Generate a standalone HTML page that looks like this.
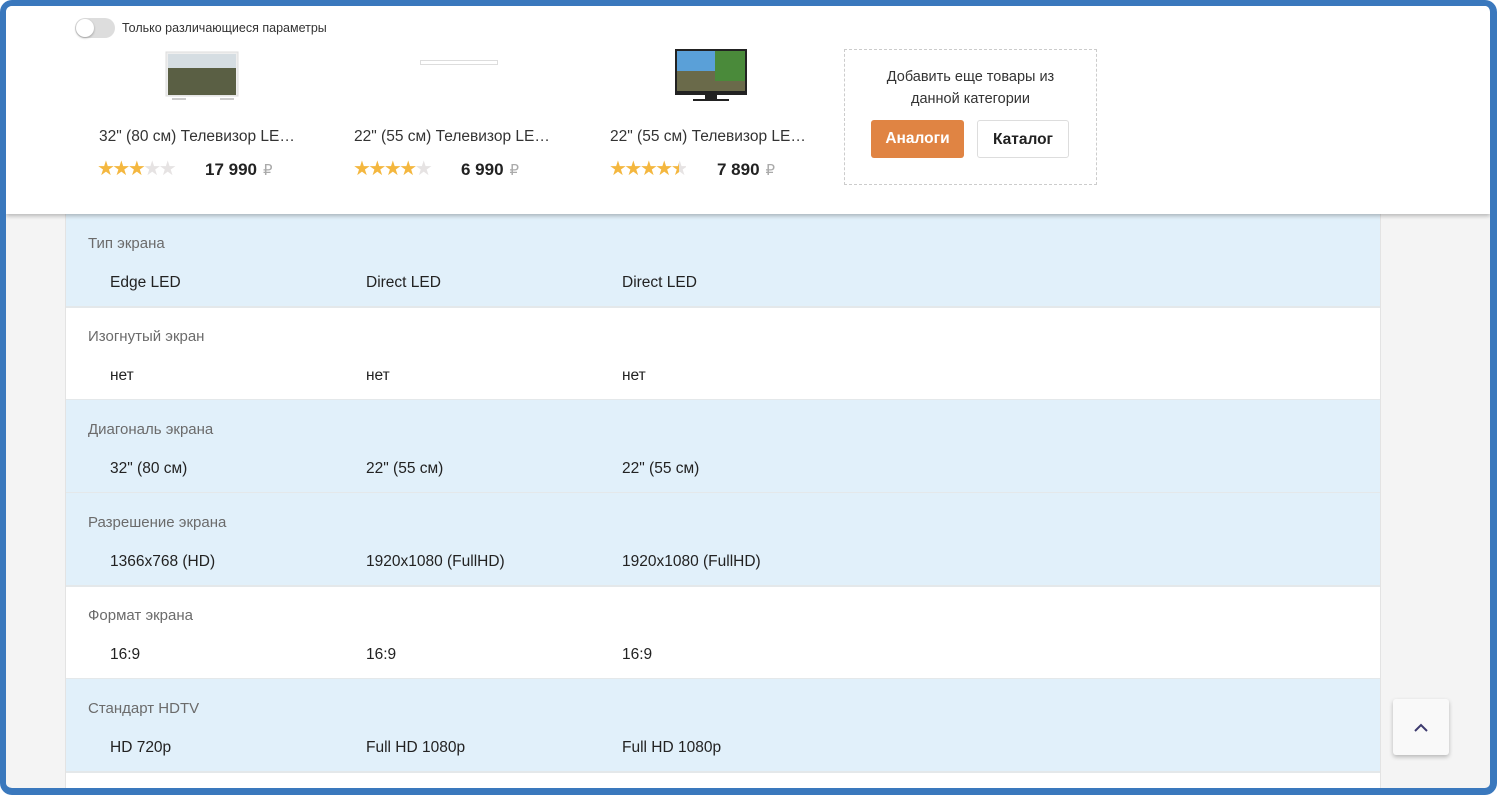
<!DOCTYPE html>
<html><head><meta charset="utf-8"><style>
*{box-sizing:border-box;margin:0;padding:0}
html,body{width:1497px;height:796px;overflow:hidden;background:#fff;font-family:"Liberation Sans","DejaVu Sans",sans-serif}
.frame{position:absolute;left:0;top:0;width:1497px;height:795px;border:6px solid #3a78bd;border-right-width:7px;border-bottom-width:7px;border-radius:12px;overflow:hidden;background:#f4f4f4}
.col{position:absolute;left:59px;top:0;width:1316px;height:800px;background:#fff;border-left:1px solid #e3e3e3;border-right:1px solid #e3e3e3}
.row{position:absolute;left:0;width:1314px;height:94px;border-bottom:2px solid #e4e8ea}
.row.b{background:#e1f0fa}
.lab{position:absolute;left:22px;top:21px;font-size:15px;color:#6b6b6b}
.v{position:absolute;top:60px;font-size:15.5px;color:#222}
.head{position:absolute;left:0;top:0;width:1484px;height:208px;background:#fff;box-shadow:0 2px 4px rgba(0,0,0,.25);z-index:2}
.tog{position:absolute;left:69px;top:12px;width:40px;height:20px;border-radius:10px;background:#ddd}
.tog:after{content:"";position:absolute;left:1px;top:1px;width:18px;height:18px;border-radius:50%;background:#fff;box-shadow:0 1px 2px rgba(0,0,0,.3)}
.togl{position:absolute;left:116px;top:15px;font-size:12.5px;color:#333}
.name{position:absolute;top:122px;font-size:15.5px;color:#333}
.stars{position:absolute;top:150px;font-size:20px;letter-spacing:-2.5px;color:#f4b73f}
.stars i{font-style:normal;color:#e6e3e3}
.price{position:absolute;top:154px;font-size:17px;font-weight:bold;color:#222}
.price span{font-weight:normal;color:#aaa;font-size:15px;margin-left:6px}
.add{position:absolute;left:838px;top:43px;width:253px;height:136px;border:1px dashed #ccc;text-align:center}
.add p{font-size:14.5px;color:#333;line-height:22px;margin-top:16px}
.btn{position:absolute;top:70px;height:38px;border-radius:3px;font-size:15.5px;font-weight:bold;line-height:37px;text-align:center}
.up{position:absolute;left:1387px;top:693px;width:56px;height:56px;background:#f9f9f9;border-radius:3px;box-shadow:0 2px 4px rgba(0,0,0,.25)}
</style></head><body>
<div class="frame">
 <div class="col">
  <div class="row b" style="top:208px"><div class="lab">Тип экрана</div><div class="v" style="left:44px">Edge LED</div><div class="v" style="left:300px">Direct LED</div><div class="v" style="left:556px">Direct LED</div></div>
  <div class="row" style="top:301px"><div class="lab">Изогнутый экран</div><div class="v" style="left:44px">нет</div><div class="v" style="left:300px">нет</div><div class="v" style="left:556px">нет</div></div>
  <div class="row b" style="top:394px"><div class="lab">Диагональ экрана</div><div class="v" style="left:44px">32" (80 см)</div><div class="v" style="left:300px">22" (55 см)</div><div class="v" style="left:556px">22" (55 см)</div></div>
  <div class="row b" style="top:487px"><div class="lab">Разрешение экрана</div><div class="v" style="left:44px">1366x768 (HD)</div><div class="v" style="left:300px">1920x1080 (FullHD)</div><div class="v" style="left:556px">1920x1080 (FullHD)</div></div>
  <div class="row" style="top:580px"><div class="lab">Формат экрана</div><div class="v" style="left:44px">16:9</div><div class="v" style="left:300px">16:9</div><div class="v" style="left:556px">16:9</div></div>
  <div class="row b" style="top:673px"><div class="lab">Стандарт HDTV</div><div class="v" style="left:44px">HD 720p</div><div class="v" style="left:300px">Full HD 1080p</div><div class="v" style="left:556px">Full HD 1080p</div></div>
 </div>
 <div class="head">
  <div class="tog"></div><div class="togl">Только различающиеся параметры</div>
  <svg style="position:absolute;left:158px;top:44px" width="78" height="56"><rect x="2" y="2" width="72" height="44" fill="#eee" stroke="#ddd"/><rect x="4" y="4" width="68" height="14" fill="#d5dde2"/><rect x="4" y="18" width="68" height="27" fill="#5a5f44"/><rect x="8" y="48" width="14" height="2" fill="#ccc"/><rect x="56" y="48" width="14" height="2" fill="#ccc"/></svg>
  <div style="position:absolute;left:414px;top:54px;width:78px;height:5px;border:1px solid #ddd"></div>
  <svg style="position:absolute;left:669px;top:43px" width="72" height="54"><rect x="0" y="0" width="72" height="46" fill="#222"/><rect x="2" y="2" width="68" height="40" fill="#5aa0d8"/><rect x="2" y="22" width="68" height="20" fill="#6a6a4a"/><rect x="40" y="2" width="30" height="30" fill="#4a8a3a"/><rect x="30" y="46" width="12" height="4" fill="#222"/><rect x="18" y="50" width="36" height="2" fill="#222"/></svg>
  <div class="name" style="left:93px">32" (80 см) Телевизор LE…</div>
  <div class="name" style="left:348px">22" (55 см) Телевизор LE…</div>
  <div class="name" style="left:604px">22" (55 см) Телевизор LE…</div>
  <div class="stars" style="left:91px">★★★<i>★★</i></div><div class="price" style="left:199px">17 990<span>₽</span></div>
  <div class="stars" style="left:347px">★★★★<i>★</i></div><div class="price" style="left:455px">6 990<span>₽</span></div>
  <div class="stars" style="left:603px">★★★★<span style="background:linear-gradient(90deg,#f4b73f 55%,#e6e3e3 55%);-webkit-background-clip:text;background-clip:text;color:transparent">★</span></div><div class="price" style="left:711px">7 890<span>₽</span></div>
  <div class="add"><p>Добавить еще товары из<br>данной категории</p>
   <div class="btn" style="left:26px;width:93px;background:#e08443;color:#fff">Аналоги</div>
   <div class="btn" style="left:132px;width:92px;border:1px solid #ddd;color:#222;background:#fff">Каталог</div>
  </div>
 </div>
 <div class="up"><svg width="56" height="56"><path d="M22 32 L28 26 L34 32" fill="none" stroke="#3d3a6e" stroke-width="2"/></svg></div>
</div>
</body></html>
